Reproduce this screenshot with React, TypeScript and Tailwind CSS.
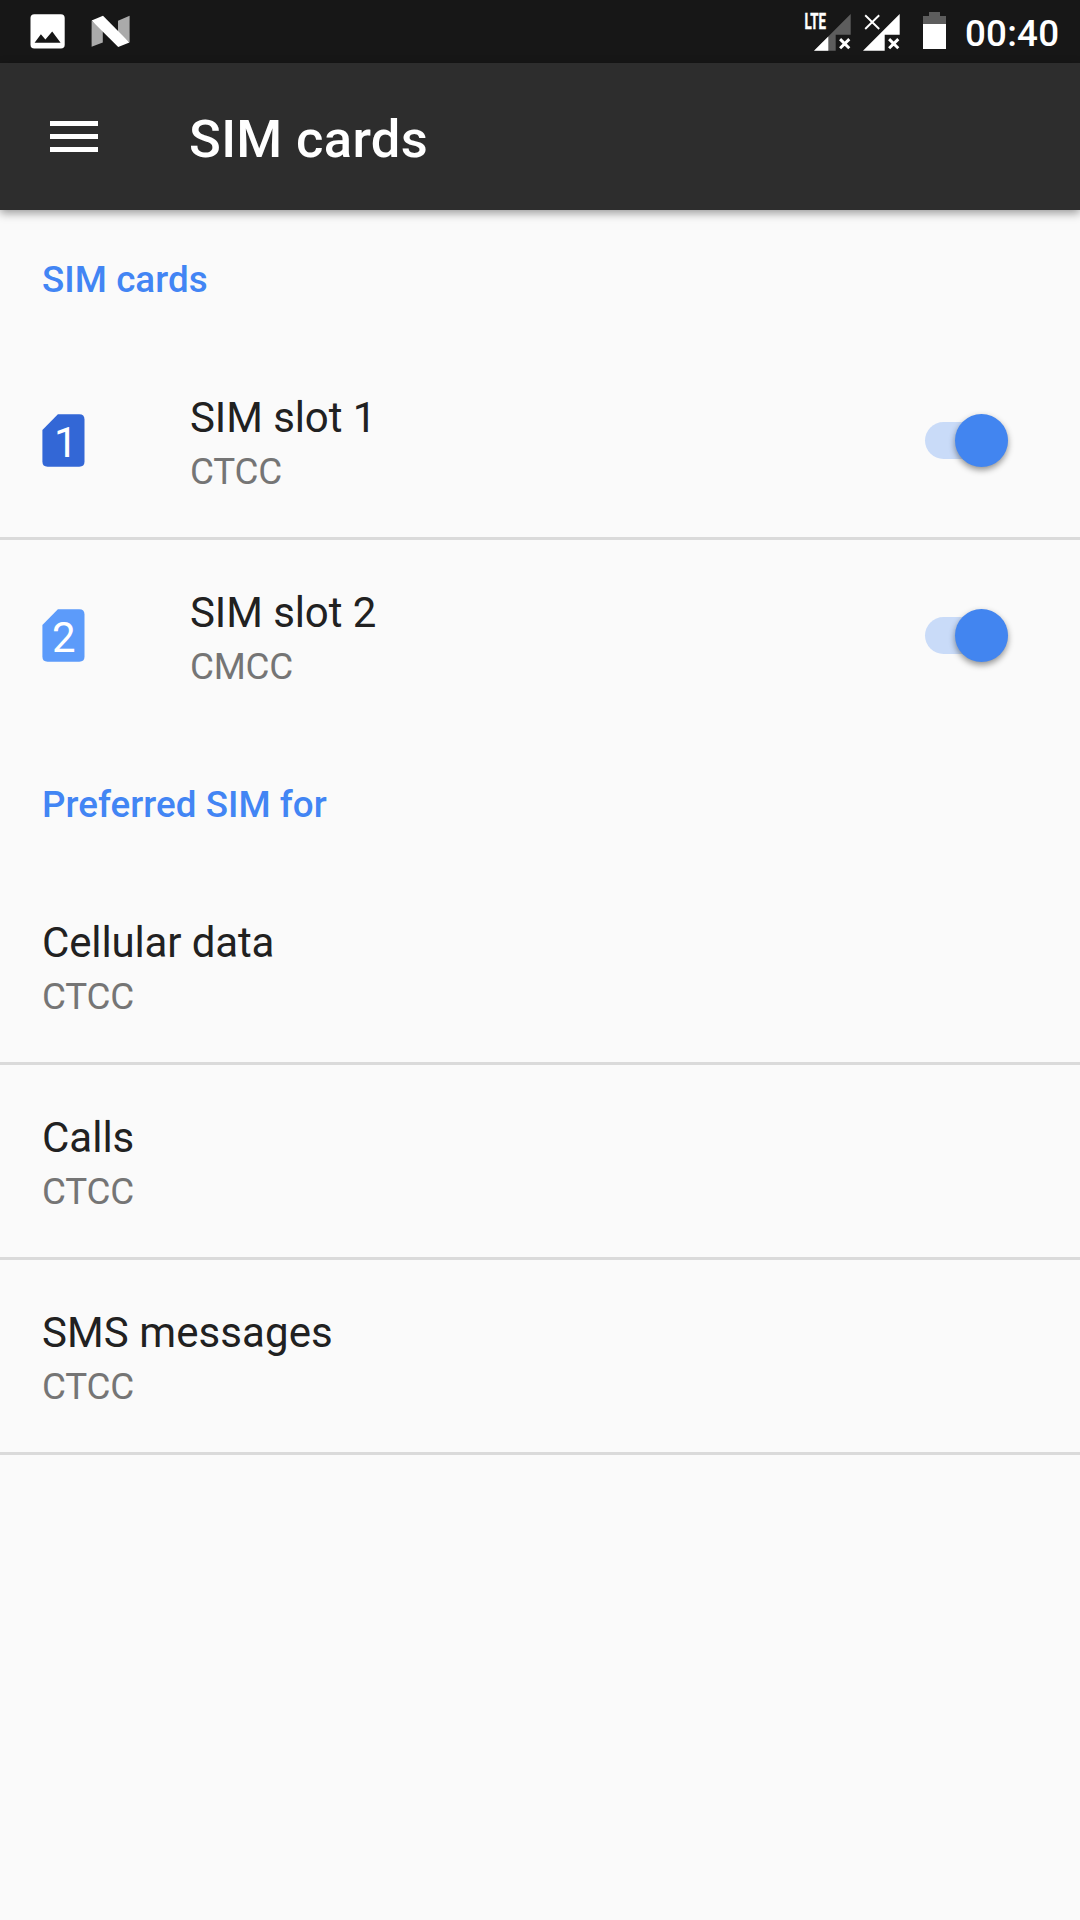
import { useState } from 'react'

type Sim = { slot: number; carrier: string; color: string }

const sims: Sim[] = [
  { slot: 1, carrier: 'CTCC', color: '#3367d6' },
  { slot: 2, carrier: 'CMCC', color: '#5c9bfa' },
]

const preferences = [
  { title: 'Cellular data', value: 'CTCC', tracking: 'tracking-[-0.13px]' },
  { title: 'Calls', value: 'CTCC', tracking: 'tracking-normal' },
  { title: 'SMS messages', value: 'CTCC', tracking: 'tracking-[0.08px]' },
]

function StatusBar() {
  return (
    <div className="flex h-[63px] items-start bg-[#171717] pl-[30px] text-white">
      <svg className="h-[63px] w-[36px] shrink-0" viewBox="0 0 36 63">
        <rect x="0.5" y="14.3" width="34.2" height="34.2" rx="3.8" fill="#fff" />
        <path d="M4.6 42.8 L10.9 34.2 L15.4 39.4 L22.2 31.4 L30.6 42.8 Z" fill="#171717" />
      </svg>
      <svg className="ml-6 h-[63px] w-[42px] shrink-0" viewBox="90 0 42 63">
        <path d="M91.6 20.8 L102.8 29 V42.4 L91.6 46.8 Z" fill="#aaa" />
        <path d="M129.6 15.8 L118 20.8 V33 L129.6 42.4 Z" fill="#aaa" />
        <path d="M91.6 20.6 L103 15.8 L129.4 42.4 L118.2 46.9 Z" fill="#fff" />
      </svg>

      <svg className="ml-auto h-[63px] w-[50px] shrink-0" viewBox="802 0 50 63">
        <path d="M850.7 14 V34.7 H835.7 V50.7 H814 Z" fill="#5d5d5d" />
        <path d="M828.3 36.4 V50.7 H814 Z" fill="#fff" />
        <path d="M840.1 39.1 L849.3 48.3 M849.3 39.1 L840.1 48.3" stroke="#fff" strokeWidth="2.9" />
        <text x="804.4" y="29" textLength="21.5" lengthAdjust="spacingAndGlyphs" fill="#fff" stroke="#fff" strokeWidth="0.4" className="font-[Roboto] text-[22px] font-bold">
          LTE
        </text>
      </svg>
      <svg className="ml-[9.5px] h-[63px] w-[40px] shrink-0" viewBox="862 0 40 63">
        <path d="M899.7 14 V34.7 H884.7 V50.7 H863 Z" fill="#fff" />
        <path d="M889.1 39.1 L898.3 48.3 M898.3 39.1 L889.1 48.3" stroke="#fff" strokeWidth="2.9" />
        <path d="M865.2 15.2 L879.2 29 M879.2 15.2 L865.2 29" stroke="#fff" strokeWidth="1.9" />
      </svg>
      <svg className="ml-[21.5px] h-[63px] w-[23px] shrink-0" viewBox="923 0 23 63">
        <path d="M929 12 H940 V16 H946 V24 H923 V16 H929 Z" fill="#5d5d5d" />
        <rect x="923" y="24" width="23" height="25" fill="#fff" />
      </svg>
      <span className="mt-3 ml-[19px] w-[115px] text-[36.75px] leading-[44px] font-medium tracking-[0.2px] whitespace-nowrap">00:40</span>
    </div>
  )
}

function Toolbar() {
  return (
    <header className="relative z-10 flex h-[147px] items-start bg-[#2d2d2d] pl-[50px] text-white shadow-[0_3px_9px_rgba(0,0,0,0.4)]">
      <button className="mt-[57.5px] flex w-12 flex-col gap-2" aria-label="Menu">
        <span className="h-[5.25px] w-full bg-white" />
        <span className="h-[5.25px] w-full bg-white" />
        <span className="h-[5.25px] w-full bg-white" />
      </button>
      <h1 className="mt-[45px] ml-[91px] text-[52.5px] leading-[62px] font-medium tracking-[0.35px]">SIM cards</h1>
    </header>
  )
}

function SectionTitle({ children }: { children: string }) {
  return (
    <h2 className="h-[135px] pt-12 pl-[42px] text-[36.75px] leading-[44px] font-medium tracking-[0.05px] text-[#4285f4]">{children}</h2>
  )
}

function RowText({ title, value, tracking = '' }: { title: string; value: string; tracking?: string }) {
  return (
    <div className="pt-12">
      <div className={`text-[42px] leading-[50px] text-[#212121] ${tracking}`}>{title}</div>
      <div className="mt-[7px] text-[36.75px] leading-[44px] tracking-[-0.2px] text-[#757575]">{value}</div>
    </div>
  )
}

function SimIcon({ slot, color }: { slot: number; color: string }) {
  return (
    <svg className="mt-[69px] h-[53px] w-[43px] shrink-0" viewBox="0 0 43 53">
      <path d="M15.9 0.2 H37.3 Q42.5 0.2 42.5 5.4 V47.5 Q42.5 52.7 37.3 52.7 H5.6 Q0.4 52.7 0.4 47.5 V15.9 Z" fill={color} />
      <text x={slot === 1 ? 23.7 : 21.9} y="43" textAnchor="middle" fill="#fff" className="font-[Roboto] text-[42px]">
        {slot}
      </text>
    </svg>
  )
}

function Switch({ label }: { label: string }) {
  const [on, setOn] = useState(true)

  return (
    <button
      role="switch"
      aria-checked={on}
      aria-label={label}
      onClick={() => setOn(!on)}
      className={`mt-[77px] mr-[72px] ml-auto flex h-[37px] w-[83px] items-center rounded-full ${on ? 'justify-end bg-[#c9dbf8]' : 'bg-[#b9b9b9]'}`}
    >
      <span className={`size-[53px] shrink-0 rounded-full shadow-[0_3px_6px_rgba(0,0,0,0.42)] ${on ? 'bg-[#4285f0]' : 'bg-[#ececec]'}`} />
    </button>
  )
}

export default function App() {
  return (
    <div className="min-h-[1920px] w-[1080px] bg-[#fafafa] font-[Roboto,sans-serif]">
      <StatusBar />
      <Toolbar />

      <SectionTitle>SIM cards</SectionTitle>
      {sims.map((sim, i) => (
        <div
          key={sim.slot}
          className={`flex h-[195px] items-start pl-[42px] ${i < sims.length - 1 ? 'border-b-3 border-[#dadada]' : ''}`}
        >
          <SimIcon slot={sim.slot} color={sim.color} />
          <div className="ml-[105px]">
            <RowText title={`SIM slot ${sim.slot}`} value={sim.carrier} tracking="tracking-[-0.08px]" />
          </div>
          <Switch label={`SIM slot ${sim.slot}`} />
        </div>
      ))}

      <SectionTitle>Preferred SIM for</SectionTitle>
      {preferences.map((item) => (
        <div key={item.title} className="h-[195px] border-b-3 border-[#dadada] pl-[42px]">
          <RowText title={item.title} value={item.value} tracking={item.tracking} />
        </div>
      ))}
    </div>
  )
}
